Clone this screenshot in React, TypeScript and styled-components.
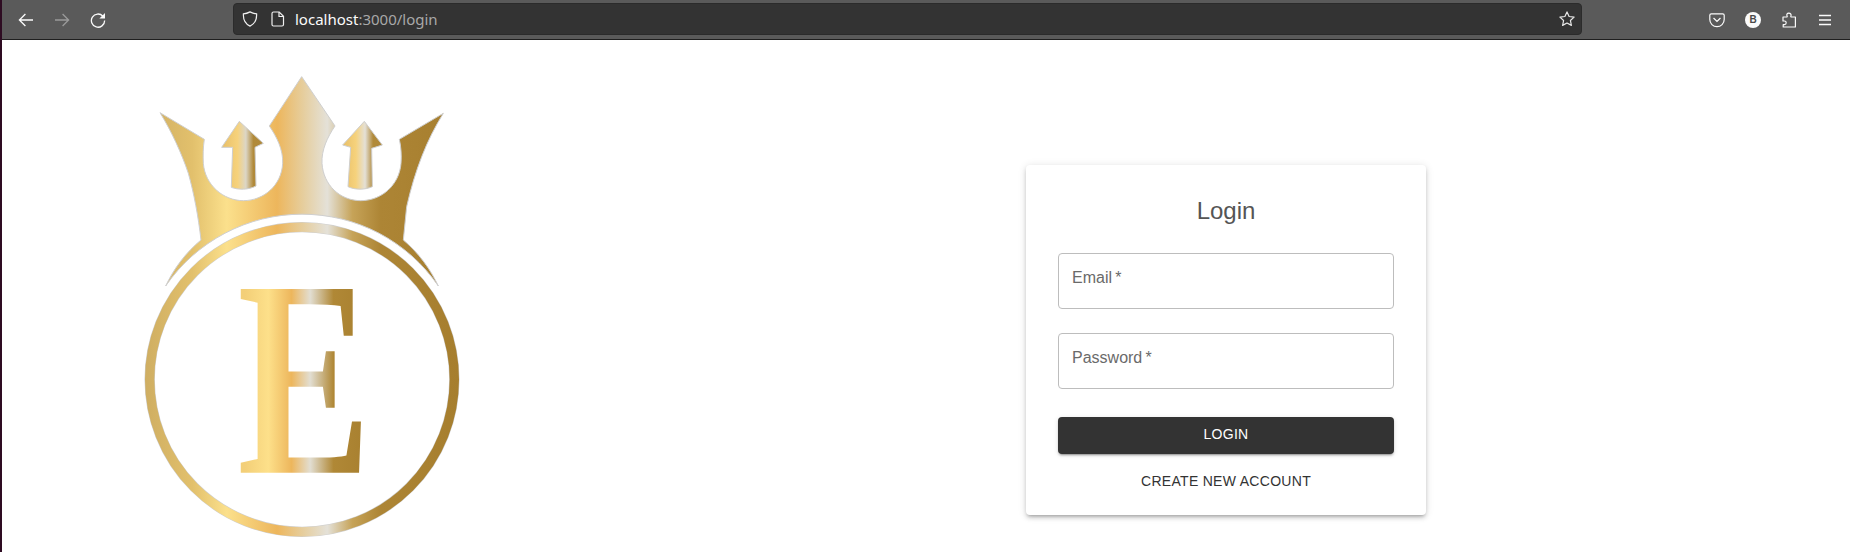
import { createGlobalStyle, styled } from "styled-components";

const GlobalStyle = createGlobalStyle`
  html, body {
    margin: 0;
    padding: 0;
    background: #ffffff;
  }

  * {
    box-sizing: border-box;
  }
`;

const BackIcon = () => (
  <svg width="16" height="16" viewBox="0 0 16 16" fill="none" stroke="currentColor" strokeWidth="1.3">
    <path d="M15 8H1.6M7.4 2 1.4 8l6 6" />
  </svg>
);

const ForwardIcon = () => (
  <svg width="16" height="16" viewBox="0 0 16 16" fill="none" stroke="currentColor" strokeWidth="1.3">
    <path d="M1 8h13.4M8.6 2l6 6-6 6" />
  </svg>
);

const ReloadIcon = () => (
  <svg width="16" height="16" viewBox="0 0 16 16" fill="none" stroke="currentColor" strokeWidth="1.3">
    <path d="M12.9 4.2A6.6 6.6 0 1 0 14.6 8.6" />
    <path d="M15 .9v5.6H9.4z" fill="currentColor" stroke="none" />
  </svg>
);

const ShieldIcon = () => (
  <svg width="16" height="16" viewBox="0 0 16 16" fill="none" stroke="currentColor" strokeWidth="1.2">
    <path d="M8 .9c2 1.1 4.2 1.8 6.6 2 .3 5.600-2 10-6.600 12.200C3.400 12.900 1.100 8.500 1.400 2.900 3.800 2.700 6 2 8 .9z" />
  </svg>
);

const PageIcon = () => (
  <svg width="16" height="16" viewBox="0 0 16 16" fill="none" stroke="currentColor" strokeWidth="1.2">
    <path d="M3.500 1h5.700L13.500 5.300V13.500a1.500 1.500 0 0 1-1.500 1.500H3.500A1.500 1.500 0 0 1 2 13.500V2.500A1.500 1.500 0 0 1 3.500 1z" />
    <path d="M9 1v4.500h4.500" />
  </svg>
);

const StarIcon = () => (
  <svg width="16" height="16" viewBox="0 0 16 16" fill="none" stroke="currentColor" strokeWidth="1.2" strokeLinejoin="round">
    <path d="M8 .9l2.100 4.600 5 .6-3.700 3.400 1 4.900L8 12l-4.400 2.400 1-4.900L.9 6.100l5-.6z" />
  </svg>
);

const PocketIcon = () => (
  <svg width="16" height="16" viewBox="0 0 16 16" fill="none" stroke="currentColor" strokeWidth="1.2">
    <path d="M2.300 1.800h11.400c.8 0 1.500.7 1.500 1.500v4.200A7.200 7.200 0 0 1 8 14.700 7.200 7.200 0 0 1 .8 7.500V3.300c0-.8.700-1.500 1.500-1.500z" />
    <path d="M4.800 6.300 8 9.400l3.200-3.100" strokeLinecap="round" />
  </svg>
);

const PuzzleIcon = () => (
  <svg width="16" height="16" viewBox="0 0 16 16" fill="none" stroke="currentColor" strokeWidth="1.2" strokeLinejoin="round">
    <path d="M2 5h3.600c.5 0 .8-.5.5-1-.7-1.200-.1-2.900 1.700-2.900S10.600 2.800 9.900 4c-.3.500 0 1 .6 1H14.400V15H2.200v-2.400H3.400c1.100 0 1.800-.7 1.800-1.800S4.500 9 3.400 9H2z" />
  </svg>
);

const MenuIcon = () => (
  <svg width="16" height="16" viewBox="0 0 16 16" fill="none" stroke="currentColor" strokeWidth="1.3">
    <path d="M2 3.500h12M2 8h12M2 12.500h12" />
  </svg>
);

const LogoMark = () => (
  <svg width="360" height="492" viewBox="0 0 1080 1476">
    <defs>
      <linearGradient id="gold" gradientUnits="userSpaceOnUse" x1="75" y1="0" x2="1018" y2="0">
        <stop offset="0" stopColor="#cfae62" />
        <stop offset="0.15" stopColor="#e2c06c" />
        <stop offset="0.26" stopColor="#fbe08c" />
        <stop offset="0.42" stopColor="#edb65c" />
        <stop offset="0.5" stopColor="#e6cd9b" />
        <stop offset="0.58" stopColor="#e4e1d8" />
        <stop offset="0.66" stopColor="#c6a358" />
        <stop offset="0.75" stopColor="#ad8535" />
        <stop offset="1" stopColor="#a67e2e" />
      </linearGradient>
      {/* the letter is scaled, so its gradient runs in the letter's own units */}
      <linearGradient id="letter" gradientUnits="userSpaceOnUse" x1="32" y1="0" x2="520" y2="0">
        <stop offset="0" stopColor="#f3cf78" />
        <stop offset="0.2" stopColor="#fde08a" />
        <stop offset="0.4" stopColor="#edb65c" />
        <stop offset="0.56" stopColor="#e2ded2" />
        <stop offset="0.76" stopColor="#b08836" />
        <stop offset="1" stopColor="#a98130" />
      </linearGradient>
      <linearGradient id="arrowLeft" gradientUnits="userSpaceOnUse" x1="305" y1="0" x2="430" y2="0">
        <stop offset="0" stopColor="#e8bf68" />
        <stop offset="0.38" stopColor="#f6d27c" />
        <stop offset="0.58" stopColor="#dcd6c6" />
        <stop offset="0.76" stopColor="#b18a3a" />
        <stop offset="1" stopColor="#b0893a" />
      </linearGradient>
      <linearGradient id="arrowRight" gradientUnits="userSpaceOnUse" x1="668" y1="0" x2="788" y2="0">
        <stop offset="0" stopColor="#e8bf68" />
        <stop offset="0.33" stopColor="#f6d27c" />
        <stop offset="0.56" stopColor="#e4e0d6" />
        <stop offset="0.76" stopColor="#b18a3a" />
        <stop offset="1" stopColor="#b0893a" />
      </linearGradient>
    </defs>

    <g stroke="#cfcfcf" strokeWidth="3">
      <path
        fill="url(#gold)"
        d="M120 158 253 238C249 262 249 290 250 310 255 375 310 422 370 422 432 422 485 375 488 310 490 270 470 230 448 198L545 50 645 198C622 232 604 270 606 310 610 375 660 422 722 422 785 422 838 375 843 310 845 285 843 260 838 238L970 160C920 240 885 330 860 440L850 540C895 578 930 625 955 678A496 496 0 0 0 137 678C162 625 197 578 243 540 235 470 222 400 205 340 185 280 155 215 120 158z"
      />
      <path
        fill="url(#arrowLeft)"
        d="M358 184 430 250 405 262 408 378C385 390 355 390 334 382L338 262 305 262z"
      />
      <path
        fill="url(#arrowRight)"
        d="M733 184 787 255 755 265 757 380C735 390 705 390 684 380L692 262 668 255z"
      />
    </g>

    <circle cx="546" cy="958.500" r="457" fill="none" stroke="#cfcfcf" strokeWidth="31" />
    <circle cx="546" cy="958.500" r="457" fill="none" stroke="url(#gold)" strokeWidth="28" />

    <LogoLetter x="0" y="0" fill="url(#letter)" transform="translate(352 1238) scale(0.716 1)">
      E
    </LogoLetter>
  </svg>
);

const App = () => {
  return (
    <Page>
      <GlobalStyle />
      <Toolbar>
        <NavGroup>
          <ToolButton>
            <BackIcon />
          </ToolButton>
          <ToolButton $dim>
            <ForwardIcon />
          </ToolButton>
          <ToolButton>
            <ReloadIcon />
          </ToolButton>
        </NavGroup>
        <UrlBar>
          <UrlIcons>
            <ShieldIcon />
            <PageIcon />
          </UrlIcons>
          <UrlText>
            localhost<UrlRest>:3000/login</UrlRest>
          </UrlText>
          <StarSlot>
            <StarIcon />
          </StarSlot>
        </UrlBar>
        <NavGroup>
          <ToolButton>
            <PocketIcon />
          </ToolButton>
          <ToolButton>
            <Badge>B</Badge>
          </ToolButton>
          <ToolButton>
            <PuzzleIcon />
          </ToolButton>
          <ToolButton>
            <MenuIcon />
          </ToolButton>
        </NavGroup>
      </Toolbar>
      <Content>
        <LogoPane>
          <LogoMark />
        </LogoPane>
        <Card>
          <Title>Login</Title>
          <Field>
            <FieldLabel>Email{"\u2009"}*</FieldLabel>
          </Field>
          <Field>
            <FieldLabel>Password{"\u2009"}*</FieldLabel>
          </Field>
          <LoginButton>LOGIN</LoginButton>
          <LinkButton>CREATE NEW ACCOUNT</LinkButton>
        </Card>
      </Content>
    </Page>
  );
};

const Page = styled.div`
  width: 1850px;
  height: 552px;

  border-left: 2px solid #2e0c22;

  background-color: #ffffff;

  overflow: hidden;
`;

const Toolbar = styled.div`
  display: flex;
  align-items: center;

  height: 40px;

  padding: 0 6px;

  border-bottom: 1px solid #1f1f1f;

  background-color: #5a5a5a;
`;

const NavGroup = styled.div`
  display: flex;
  align-items: center;
`;

const ToolButton = styled.div<{ $dim?: boolean }>`
  display: flex;
  align-items: center;
  justify-content: center;

  width: 36px;
  height: 32px;

  color: ${({ $dim }) => ($dim ? "#9a9a9a" : "#fbfbfb")};
`;

const UrlBar = styled.div`
  display: flex;
  align-items: center;

  width: 1349px;
  height: 32px;

  margin: 0 117px 1px;
  padding: 0 6px 0 8px;

  border-radius: 4px;
  border: 1px solid #2b2b2b;

  background-color: #333333;
`;

const UrlIcons = styled.div`
  display: flex;
  align-items: center;
  gap: 12px;

  color: #f0f0f0;
`;

const UrlText = styled.div`
  flex: 1;

  margin-left: 9px;

  font-family: "Noto Sans", sans-serif;
  font-size: 15px;
  color: #fbfbfb;
`;

const UrlRest = styled.span`
  color: #a8a8a8;
`;

const StarSlot = styled.div`
  display: flex;

  color: #e8e8e8;
`;

const Badge = styled.div`
  display: flex;
  align-items: center;
  justify-content: center;

  width: 16px;
  height: 16px;

  border-radius: 50%;

  background-color: #fbfbfb;

  font-family: "Liberation Sans", sans-serif;
  font-size: 10px;
  font-weight: 700;
  color: #4a4a4a;
`;

const Content = styled.main`
  display: flex;
  align-items: flex-start;
`;

const LogoPane = styled.div`
  display: flex;

  width: 1024px;
  height: 512px;

  padding-left: 118px;
  padding-top: 20px;
`;

const Card = styled.section`
  display: flex;
  flex-direction: column;

  width: 400px;
  height: 350px;

  margin-top: 125px;
  padding: 30px 32px 0;

  border-radius: 4px;

  background-color: #ffffff;
  box-shadow:
    0 3px 3px -2px rgba(0, 0, 0, 0.2),
    0 3px 4px 0 rgba(0, 0, 0, 0.14),
    0 1px 8px 0 rgba(0, 0, 0, 0.12);
`;

const Title = styled.h5`
  flex-shrink: 0;

  margin: 0 0 26px;

  font-family: "Liberation Sans", sans-serif;
  font-size: 24px;
  font-weight: 400;
  line-height: 32px;
  text-align: center;
  color: #555555;
`;

const Field = styled.div`
  display: flex;
  flex-shrink: 0;

  height: 56px;

  margin-bottom: 24px;
  padding: 14px 13px 0;

  border: 1px solid #bdbdbd;
  border-radius: 4px;
`;

const FieldLabel = styled.label`
  font-family: "Liberation Sans", sans-serif;
  font-size: 16px;
  line-height: 20px;
  color: #6a6a6a;
`;

const LoginButton = styled.button`
  flex-shrink: 0;

  height: 37px;

  margin-top: 4px;
  padding: 0 0 3px;

  border: none;
  border-radius: 4px;

  background-color: #333333;
  box-shadow:
    0 3px 1px -2px rgba(0, 0, 0, 0.2),
    0 2px 2px 0 rgba(0, 0, 0, 0.14),
    0 1px 5px 0 rgba(0, 0, 0, 0.12);

  font-family: "Liberation Sans", sans-serif;
  font-size: 14px;
  letter-spacing: 0.3px;
  color: #ffffff;
`;

const LinkButton = styled.button`
  flex-shrink: 0;

  height: 37px;

  margin-top: 8px;
  padding: 0;

  border: none;

  background: none;

  font-family: "Liberation Sans", sans-serif;
  font-size: 14px;
  letter-spacing: 0.3px;
  color: #333333;
`;

const LogoLetter = styled.text`
  font-family: "Liberation Serif", serif;
  font-size: 841px;
  font-weight: 700;
`;

export default App;
